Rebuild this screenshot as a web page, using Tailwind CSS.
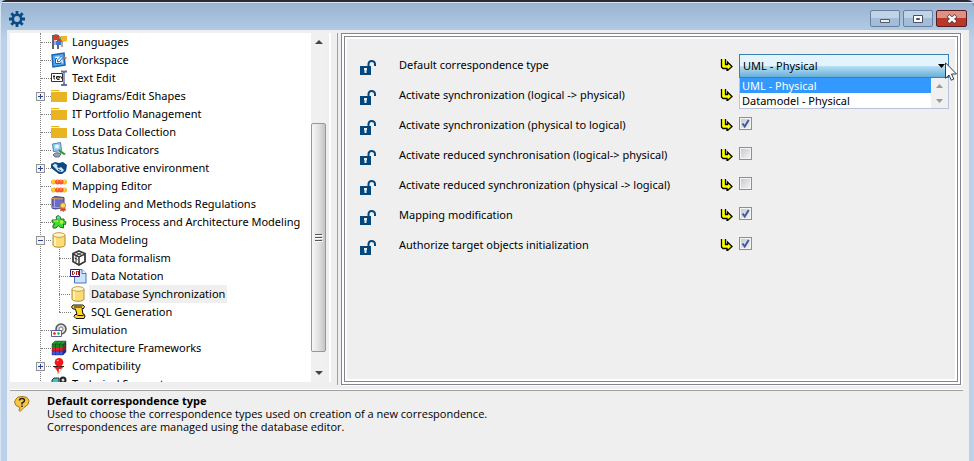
<!DOCTYPE html>
<html lang="en">
<head>
    <meta charset="UTF-8">
    <meta name="viewport" content="width=device-width, initial-scale=1.0">
    <title>Options</title>
    <script src="https://cdn.jsdelivr.net/npm/@tailwindcss/browser@4"></script>
</head>
<body class="h-screen overflow-hidden bg-[#b9d1ea] font-['Noto_Sans','Open_Sans',sans-serif] text-[11px] text-black">

    <!-- shared shapes -->
    <svg class="hidden">
        <symbol id="folder" viewBox="0 0 16 16"><path d="M0 2h8l1 2h7v10H0z" fill="#e8b422"/><path d="M0 3.5h9" stroke="#fff1bd"/></symbol>
        <symbol id="cylinder" viewBox="0 0 16 16">
            <path d="M2 3v10c0 3 12 3 12 0V3z" fill="#fbdc75" stroke="#b48a32"/>
            <path d="M4 5v9" stroke="#fff3b8" stroke-width="2"/>
            <ellipse cx="8" cy="3" rx="6" ry="2.3" fill="#fff5c5" stroke="#c59d45"/>
        </symbol>
        <symbol id="lock" viewBox="0 0 16 16">
            <path d="M0 6h7.500V4.500C7.500 1.500 9 0 11.500 0S16 1.500 16 4v2h-2V4.500C14 2.700 13 2 11.700 2S9.500 2.800 9.500 4.500V6H11v9H0z" fill="#03477f"/>
            <path d="M4 8h3v2l-.5.500V13h-2v-2.500L4 10z" fill="#e5edf4"/>
        </symbol>
        <symbol id="arrow" viewBox="0 0 13 13"><path d="M1.500 1.500v7.500l1.500 1.500h4v2.500l5-4.500L7 4v2.500H5.500v-5z" fill="#ff0"/><path d="M1.500 1v8L3 10.500h4V13l5-4.500L7.500 4v2.500h-2V1" fill="none" stroke="#000" stroke-width="1.300"/></symbol>
    </svg>

    <div class="flex h-screen flex-col rounded-t-md border-t-2 border-l border-t-[#2c2b35] border-l-[#d8e5f3] bg-linear-to-b from-[#98b3d0] via-[#b9d1ea] via-8% to-[#b9d1ea]">
        <header class="flex h-7 shrink-0 items-center justify-between border-t border-[#d9e6f4] pr-[7px] pl-2">
            <svg class="mt-1 size-4 text-[#0a4a85]" viewBox="0 0 16 16" fill="none" stroke="currentColor">
                <circle cx="8" cy="8" r="4.200" stroke-width="2.600"/>
                <g stroke-width="2.800"><path d="M8 0v3M8 13v3M0 8h3M13 8h3M2.300 2.300l2.200 2.200M11.500 11.500l2.200 2.200M2.300 13.700l2.200-2.200M11.500 4.500l2.200-2.200"/></g>
            </svg>
            <div class="mt-1 flex gap-[3px]">
                <button type="button" aria-label="Minimize" class="flex h-[17px] w-[30px] items-center justify-center rounded-xs border border-[#67809d] bg-linear-to-b from-[#c1d3e7] from-50% to-[#a3bcd7] to-50%">
                    <svg class="h-4 w-5 shrink-0" viewBox="0 0 20 16"><path d="M5.500 8.500h9v3h-9z" fill="#eee" stroke="#555a66"/></svg>
                </button>
                <button type="button" aria-label="Maximize" class="flex h-[17px] w-[30px] items-center justify-center rounded-xs border border-[#67809d] bg-linear-to-b from-[#c1d3e7] from-50% to-[#a3bcd7] to-50%">
                    <svg class="h-4 w-5 shrink-0" viewBox="0 0 20 16"><path d="M5.500 4.500h9v7h-9z" fill="#fff" stroke="#4a4f6b"/><path d="M8.500 7.500h3v1h-3z" fill="#9db8d5" stroke="#4a4f6b"/></svg>
                </button>
                <button type="button" aria-label="Close" class="flex h-[17px] w-[31px] items-center justify-center rounded-xs border border-[#5b1a22] bg-linear-to-b from-[#dc9183] from-50% to-[#b93828] to-50%">
                    <svg class="h-4 w-5 shrink-0" viewBox="0 0 20 16"><path d="M6 4.500l8 7M14 4.500l-8 7" stroke="#59424b" stroke-width="4"/><path d="M6.500 5l7 6M13.500 5l-7 6" stroke="#fff" stroke-width="2.400"/></svg>
                </button>
            </div>
        </header>

        <main class="mr-[5px] ml-1.5 flex min-h-0 flex-1 flex-col bg-[#efefef] pt-[3px] pr-1.5 pl-[3px]">
            <div class="flex min-h-0 flex-1 gap-[3px]">

                <!-- option tree -->
                <div class="flex w-[328px] shrink-0 border-r border-[#a0a0a0] pb-[3px]">
                    <nav class="min-w-0 flex-1 overflow-hidden bg-white" aria-label="Options">
                        <ul class="ml-[30px] border-l border-dotted border-[#808080] leading-[18px] whitespace-nowrap">
                            <li class="flex h-[18px] items-center">
                                <span class="w-2.5 border-t border-dotted border-[#808080]"></span>
                                <svg class="size-4 shrink-0" viewBox="0 0 16 16"><path d="M2 1v14M7 5v10" stroke="#333" stroke-width="1.500"/><path d="M2 2q3-2 6 0t5 0v5q-3 2-5 0T2 7z" fill="#c9412d"/><path d="M10 2h6v5l-4 1-2-2z" fill="#f0b52b"/><path d="M5 7h5v4H5z" fill="#4277d1"/><path d="M3 7h2v4H3z" fill="#8fb6e8"/><path d="M8 3h2v2H8z" fill="#4b5"/><path d="M2 1.500q3-1.500 6 0M11 8v5" stroke="#555" fill="none"/></svg>
                                <a href="#" class="ml-[5px]">Languages</a>
                            </li>
                            <li class="flex h-[18px] items-center">
                                <span class="w-2.5 border-t border-dotted border-[#808080]"></span>
                                <svg class="size-4 shrink-0" viewBox="0 0 16 16"><path d="M1 3l12-2 1 12-12 2z" fill="#58a9ef" stroke="#1765b5" stroke-width="1.500"/><path d="M4.500 5h6l1 6h-7z" fill="#fff" stroke="#dceeff"/><path d="M10.500 4l-4 4v2l2-.5 3.500-4M6 6.500H4.500v5H10V9.500" stroke="#1765b5" fill="none"/><path d="M12 4l4 1.500-2 2z" fill="#e67528"/></svg>
                                <a href="#" class="ml-[5px]">Workspace</a>
                            </li>
                            <li class="flex h-[18px] items-center">
                                <span class="w-2.5 border-t border-dotted border-[#808080]"></span>
                                <svg class="size-4 shrink-0" viewBox="0 0 16 16"><path d="M.5 3.500h11v8H.500z" fill="#fff" stroke="#333"/><path d="M3 5v4h1M2 6.500h2M6 9.500h2.500M5.500 8h3V6.500h-3V9M9.500 6l2 3.500" stroke="#222" fill="none"/><path d="M10 1.500h2l1 1 1-1h2M13 2v12M10 15h2l1-1 1 1h2" stroke="#6b6d9e" fill="none" stroke-width="2"/><path d="M13 3v10" stroke="#c7c9e8"/></svg>
                                <a href="#" class="ml-[5px]">Text Edit</a>
                            </li>
                            <li class="relative flex h-[18px] items-center">
                                <button type="button" aria-label="Expand" class="absolute -left-[5px] flex size-[9px] items-center justify-center border border-[#919191] bg-[#f4f4f4]"><svg class="size-[5px] shrink-0" viewBox="0 0 5 5"><path d="M0 2.500h5M2.500 0v5" stroke="#28459c"/></svg></button>
                                <span class="w-2.5 border-t border-dotted border-[#808080]"></span>
                                <svg class="size-4 shrink-0"><use href="#folder"/></svg>
                                <a href="#" class="ml-[5px]">Diagrams/Edit Shapes</a>
                            </li>
                            <li class="flex h-[18px] items-center">
                                <span class="w-2.5 border-t border-dotted border-[#808080]"></span>
                                <svg class="size-4 shrink-0"><use href="#folder"/></svg>
                                <a href="#" class="ml-[5px]">IT Portfolio Management</a>
                            </li>
                            <li class="flex h-[18px] items-center">
                                <span class="w-2.5 border-t border-dotted border-[#808080]"></span>
                                <svg class="size-4 shrink-0"><use href="#folder"/></svg>
                                <a href="#" class="ml-[5px]">Loss Data Collection</a>
                            </li>
                            <li class="flex h-[18px] items-center">
                                <span class="w-2.5 border-t border-dotted border-[#808080]"></span>
                                <svg class="size-4 shrink-0" viewBox="0 0 16 16"><path d="M1.500 2l8-1.500 1 8-8 1z" fill="#8fd0f3" stroke="#5a80a8"/><circle cx="6" cy="4.500" r="2" fill="#e9f8ff"/><path d="M2 13q3-4 8-1l-2 3H4z" fill="#9c9eb5" stroke="#6a6b85"/><path d="M8 7l7 5-2 1-5-3z" fill="#2f9e35"/></svg>
                                <a href="#" class="ml-[5px]">Status Indicators</a>
                            </li>
                            <li class="relative flex h-[18px] items-center">
                                <button type="button" aria-label="Expand" class="absolute -left-[5px] flex size-[9px] items-center justify-center border border-[#919191] bg-[#f4f4f4]"><svg class="size-[5px] shrink-0" viewBox="0 0 5 5"><path d="M0 2.500h5M2.500 0v5" stroke="#28459c"/></svg></button>
                                <span class="w-2.5 border-t border-dotted border-[#808080]"></span>
                                <svg class="size-4 shrink-0" viewBox="0 0 16 16"><path d="M0 4l4-2 4 1 4-1 4 3-1 6-4 3H8L4 11 0 8z" fill="#0b4a80"/><path d="M1.500 5.500l2.500-2L6.500 5 6 7l2 1 2-1 3 3-1 1.500-2 .5-3-1-3-3z" fill="#cfe3f2"/><path d="M7 9l3 2" stroke="#0b4a80"/></svg>
                                <a href="#" class="ml-[5px]">Collaborative environment</a>
                            </li>
                            <li class="flex h-[18px] items-center">
                                <span class="w-2.5 border-t border-dotted border-[#808080]"></span>
                                <svg class="size-4 shrink-0" viewBox="0 0 16 16"><path d="M0 4h16M0 12h16" stroke="#e59a1c"/><g fill="#ffc928" stroke="#e2a21c" stroke-width=".6"><circle cx="2.500" cy="4" r="2.200"/><circle cx="13.500" cy="4" r="2.200"/><circle cx="2.500" cy="12" r="2.200"/><circle cx="13.500" cy="12" r="2.200"/></g><g fill="#fa5b27"><circle cx="6.500" cy="4" r="2.500"/><circle cx="10" cy="4" r="2.500"/><circle cx="6.500" cy="12" r="2.500"/><circle cx="10" cy="12" r="2.500"/></g><path d="M1.500 3h1M13 3h1M6 3h1M9.500 3h1M1.500 11h1M13 11h1M6 11h1M9.500 11h1" stroke="#fff0a0"/></svg>
                                <a href="#" class="ml-[5px]">Mapping Editor</a>
                            </li>
                            <li class="flex h-[18px] items-center">
                                <span class="w-2.5 border-t border-dotted border-[#808080]"></span>
                                <svg class="size-4 shrink-0" viewBox="0 0 16 16"><path d="M1 2l3-1.500 9 1V12l-9 1-3-1z" fill="#6a6cc9" stroke="#42438a"/><path d="M3.500 3v9" stroke="#a5a7f0"/><path d="M1 2.500l11 .5M1 11l9 1" stroke="#d9a54a"/><path d="M10 11l-1 4.500 2-1 1.500 1.500 1-1.500 1.500.5-1-4z" fill="#d6452d"/><circle cx="12" cy="9.500" r="2.700" fill="#f7d774" stroke="#bd8a2d"/></svg>
                                <a href="#" class="ml-[5px]">Modeling and Methods Regulations</a>
                            </li>
                            <li class="flex h-[18px] items-center">
                                <span class="w-2.5 border-t border-dotted border-[#808080]"></span>
                                <svg class="size-4 shrink-0" viewBox="0 0 16 16"><path d="M6 5l-1-2 2-1.500L9.500 3 9 5h4V7l2 1-.5 2.500-2-.5V14l-4-1-1-1.500L5 14H2v-3l2-1-3-2V6h3z" fill="#3ddf2e" stroke="#2a6b25"/><path d="M6 2.500h3v2H6z" fill="#42dff4"/><path d="M2 6.500h5v1H3z" fill="#ffe33d"/><path d="M9 6.500h3v3H9z" fill="#b8f53a"/></svg>
                                <a href="#" class="ml-[5px]">Business Process and Architecture Modeling</a>
                            </li>
                            <li>
                                <div class="relative flex h-[18px] items-center">
                                    <button type="button" aria-label="Collapse" class="absolute -left-[5px] flex size-[9px] items-center justify-center border border-[#919191] bg-[#f4f4f4]"><svg class="size-[5px] shrink-0" viewBox="0 0 5 5"><path d="M0 2.500h5" stroke="#28459c"/></svg></button>
                                    <span class="w-2.5 border-t border-dotted border-[#808080]"></span>
                                    <svg class="size-4 shrink-0"><use href="#cylinder"/></svg>
                                    <a href="#" class="ml-[5px]">Data Modeling</a>
                                </div>
                                <ul class="relative ml-[18px] before:absolute before:top-0 before:bottom-[9px] before:border-l before:border-dotted before:border-[#808080]">
                                    <li class="flex h-[18px] items-center">
                                        <span class="w-3 border-t border-dotted border-[#808080]"></span>
                                        <svg class="size-4 shrink-0" viewBox="0 0 16 16"><path d="M8 1l6 2.500v8L8 15l-6-3.500v-8z" fill="#fff" stroke="#3b3b3b" stroke-width="1.800"/><path d="M2 4l6 3 6-3M8 7v8" stroke="#3b3b3b" stroke-width="1.500" fill="none"/><path d="M5 2.500l6 3M11 2.500l-6 3M3.500 8l3 1.500M5 6v6" stroke="#3b3b3b" fill="none"/></svg>
                                        <a href="#" class="ml-1">Data formalism</a>
                                    </li>
                                    <li class="flex h-[18px] items-center">
                                        <span class="w-[11px] border-t border-dotted border-[#808080]"></span>
                                        <svg class="h-4 w-[17px] shrink-0" viewBox="0 0 17 16"><path d="M4.500 1.500H12l4 4v9.500H4.500z" fill="#cfe2fb" stroke="#4874b9"/><path d="M12 1.500v4h4" fill="#fff" stroke="#4874b9"/><path d="M.5 1.500h9v7h-9z" fill="#fff" stroke="#20207c"/><path d="M2.500 3v4M2 3.500h1.500l1 1v1l-1 1H2M6.500 7V3l1 1 1-1v4" stroke="#a51c1c" fill="none"/></svg>
                                        <a href="#" class="ml-1">Data Notation</a>
                                    </li>
                                    <li class="flex h-[18px] items-center">
                                        <span class="w-[11px] border-t border-dotted border-[#808080]"></span>
                                        <svg class="size-4 shrink-0"><use href="#cylinder"/></svg>
                                        <a href="#" class="ml-[3px] bg-[#efefef] px-0.5">Database Synchronization</a>
                                    </li>
                                    <li class="flex h-[18px] items-center">
                                        <span class="w-3 border-t border-dotted border-[#808080]"></span>
                                        <svg class="size-4 shrink-0" viewBox="0 0 16 16"><path d="M2 1h10l1.500 1.500-1 2H11l1 5.500h1l1 2-1 2.500H5l-2-2 1-2h2L4.500 5H2L.500 3z" fill="#ffd82c" stroke="#111"/><path d="M3 3h8M6.500 11.500h6" stroke="#111"/></svg>
                                        <a href="#" class="ml-1">SQL Generation</a>
                                    </li>
                                </ul>
                            </li>
                            <li class="flex h-[18px] items-center">
                                <span class="w-2.5 border-t border-dotted border-[#808080]"></span>
                                <svg class="size-4 shrink-0" viewBox="0 0 16 16"><circle cx="10" cy="7" r="5" fill="#ddd" stroke="#555" stroke-width="1.500"/><circle cx="10" cy="7" r="2" fill="#fff" stroke="#777"/><path d="M.5 8.500h10v6H.500z" fill="#fff" stroke="#5b5fa0"/><circle cx="3.500" cy="11.500" r="1.300" fill="#f2142c"/><circle cx="7.500" cy="11.500" r="1.300" fill="#15b53d"/></svg>
                                <a href="#" class="ml-[5px]">Simulation</a>
                            </li>
                            <li class="flex h-[18px] items-center">
                                <span class="w-2.5 border-t border-dotted border-[#808080]"></span>
                                <svg class="size-4 shrink-0" viewBox="0 0 16 16"><path d="M1 4l3-3h11l-3 3z" fill="#25a52e"/><path d="M1 4h11v3.500H1z" fill="#19851f"/><path d="M1 7.500h11V11H1z" fill="#e51f35"/><path d="M1 11h11v4H1z" fill="#3f53e4"/><path d="M12 4l3-3v3.500l-3 3z" fill="#155e1a"/><path d="M12 7.500l3-3V8l-3 3z" fill="#96162a"/><path d="M12 11l3-3v4l-3 3z" fill="#202f8e"/><path d="M1 4h11v11H1zM1 7.500h11l3-3M1 11h11l3-3M4.500 15V4l3-3M8.500 15V4l3-3M12 4l3-3v11l-3 3M1 4l3-3h11" stroke="#222" stroke-width=".4" fill="none"/></svg>
                                <a href="#" class="ml-[5px]">Architecture Frameworks</a>
                            </li>
                            <li class="relative flex h-[18px] items-center">
                                <button type="button" aria-label="Expand" class="absolute -left-[5px] flex size-[9px] items-center justify-center border border-[#919191] bg-[#f4f4f4]"><svg class="size-[5px] shrink-0" viewBox="0 0 5 5"><path d="M0 2.500h5M2.500 0v5" stroke="#28459c"/></svg></button>
                                <span class="w-2.5 border-t border-dotted border-[#808080]"></span>
                                <svg class="size-4 shrink-0" viewBox="0 0 16 16"><path d="M13 8l-6 8-1-4z" fill="#fff" stroke="#999" stroke-width=".6"/><path d="M2 8h11l-3 3H8l-.5 4L5 11z" fill="#ed1717"/><path d="M2 8.500h11" stroke="#222"/><circle cx="8" cy="4.300" r="4.300" fill="#f81414"/><path d="M6 3l1.500-1" stroke="#ffb0b0" stroke-width="1.500"/></svg>
                                <a href="#" class="ml-[5px]">Compatibility</a>
                            </li>
                            <li class="flex h-[18px] items-center">
                                <span class="w-2.5 border-t border-dotted border-[#808080]"></span>
                                <svg class="size-4 shrink-0" viewBox="0 0 16 16"><path d="M1 4l2-2h5v12H1z" fill="#40bfc4" stroke="#333"/><circle cx="12" cy="4" r="2.500" fill="#ddd" stroke="#222" stroke-width="2"/><path d="M12 6v9" stroke="#444" stroke-width="2"/></svg>
                                <a href="#" class="ml-[5px]">Technical Support</a>
                            </li>
                        </ul>
                    </nav>
                    <div class="mr-[3px] flex w-[15px] flex-col items-center bg-[#f0f0f0]">
                        <svg class="h-[18px] w-2 shrink-0" viewBox="0 0 8 18"><path d="M4 7l4 4H0z" fill="#444"/></svg>
                        <div class="flex-[72]"></div>
                        <div class="flex w-[15px] flex-[227] items-center justify-center rounded-xs border border-[#979797] bg-linear-to-r from-[#f6f6f6] via-[#e2e2e2] to-[#c5c5c9]">
                            <svg class="h-2.5 w-2" viewBox="0 0 8 10"><path d="M0 1.500h7M0 4.500h7M0 7.500h7" stroke="#555"/><path d="M1 2.500h7M1 5.500h7M1 8.500h7" stroke="#fff"/></svg>
                        </div>
                        <div class="flex-[12]"></div>
                        <svg class="h-[18px] w-2 shrink-0" viewBox="0 0 8 18"><path d="M0 7h8l-4 4z" fill="#444"/></svg>
                    </div>
                    <div class="w-0.5 bg-white"></div>
                    <div class="w-1.5"></div>
                </div>

                <!-- settings -->
                <section class="mr-0.5 min-w-0 flex-1 border border-[#84858f] bg-white p-0.5 shadow-[2px_1px_0_#ffffff]">
                    <form class="flex h-full flex-col border border-[#84858f] bg-[#efefef] pt-3 pl-[15px] shadow-[inset_0_0_0_2px_#ffffff]">
                        <div class="flex h-[30px]">
                            <svg class="mt-[11px] size-4 shrink-0"><use href="#lock"/></svg>
                            <label for="type" class="ml-[23px] w-[321px] pt-[7px] leading-[18px]">Default correspondence type</label>
                            <svg class="mt-[9px] mr-1.5 size-[13px] shrink-0"><use href="#arrow"/></svg>
                            <div class="relative mt-[5px] h-6 w-[210px]">
                                <select id="type" class="h-6 w-full appearance-none border border-[#3c7fb1] bg-linear-to-b from-[#e3f4fc] from-50% via-[#b8e0f3] via-50% to-[#66afd8] pl-[3px]">
                                    <option>UML - Physical</option>
                                    <option>Datamodel - Physical</option>
                                </select>
                                <svg class="pointer-events-none absolute top-2.5 right-1 h-1 w-[7px]" viewBox="0 0 7 4"><path d="M0 0h7L3.500 4z"/></svg>
                                <div class="absolute top-6 left-0 z-10 flex w-full border border-t-0 border-[#b9c4dc] bg-white">
                                    <ul role="listbox" class="flex-1 leading-[15px]">
                                        <li role="option" aria-selected="true" class="bg-[#3399ff] pl-0.5 text-white">UML - Physical</li>
                                        <li role="option" aria-selected="false" class="pl-0.5">Datamodel - Physical</li>
                                    </ul>
                                    <div class="flex w-[17px] flex-col items-center justify-around bg-[#f0f0f0]">
                                        <svg class="h-1 w-[7px]" viewBox="0 0 7 4"><path d="M3.500 0L7 4H0z" fill="#999"/></svg>
                                        <svg class="h-1 w-[7px]" viewBox="0 0 7 4"><path d="M0 0h7L3.500 4z" fill="#999"/></svg>
                                    </div>
                                </div>
                                <!-- mouse pointer -->
                                <svg class="absolute top-2 -right-2 z-20 h-[19px] w-3" viewBox="0 0 12 19"><path d="M.5.800v15.500l3.500-3.300 2.300 5.200 2.500-1.100L6.500 12h5z" fill="#fff" stroke="#333b50"/></svg>
                            </div>
                        </div>
                        <div class="flex h-[30px]">
                            <svg class="mt-[11px] size-4 shrink-0"><use href="#lock"/></svg>
                            <label for="lp" class="ml-[23px] w-[321px] pt-[7px] leading-[18px]">Activate synchronization (logical -&gt; physical)</label>
                            <svg class="mt-[9px] mr-1.5 size-[13px] shrink-0"><use href="#arrow"/></svg>
                            <input id="lp" type="checkbox" checked class="mt-2 size-[13px] appearance-none border border-[#8e8f8f] bg-[#f4f4f4]">
                        </div>
                        <div class="flex h-[30px]">
                            <svg class="mt-[11px] size-4 shrink-0"><use href="#lock"/></svg>
                            <label for="pl" class="ml-[23px] w-[321px] pt-[7px] leading-[18px]">Activate synchronization (physical to logical)</label>
                            <svg class="mt-[9px] mr-1.5 size-[13px] shrink-0"><use href="#arrow"/></svg>
                            <span class="relative mt-2 size-[13px]">
                                <input id="pl" type="checkbox" checked class="peer block size-[13px] appearance-none border border-[#8e8f8f] bg-linear-to-br from-[#c3c7ce] to-[#f6f6f6] shadow-[inset_0_0_0_1px_#f4f4f4]">
                                <svg class="pointer-events-none absolute inset-0 hidden peer-checked:block" viewBox="0 0 13 13"><path d="M3.500 6.500l2.200 3L9.700 3" fill="none" stroke="#435a9c" stroke-width="2"/></svg>
                            </span>
                        </div>
                        <div class="flex h-[30px]">
                            <svg class="mt-[11px] size-4 shrink-0"><use href="#lock"/></svg>
                            <label for="rlp" class="ml-[23px] w-[321px] pt-[7px] leading-[18px]">Activate reduced synchronisation (logical-&gt; physical)</label>
                            <svg class="mt-[9px] mr-1.5 size-[13px] shrink-0"><use href="#arrow"/></svg>
                            <span class="relative mt-2 size-[13px]">
                                <input id="rlp" type="checkbox" class="peer block size-[13px] appearance-none border border-[#8e8f8f] bg-linear-to-br from-[#c3c7ce] to-[#f6f6f6] shadow-[inset_0_0_0_1px_#f4f4f4]">
                                <svg class="pointer-events-none absolute inset-0 hidden peer-checked:block" viewBox="0 0 13 13"><path d="M3.500 6.500l2.200 3L9.700 3" fill="none" stroke="#435a9c" stroke-width="2"/></svg>
                            </span>
                        </div>
                        <div class="flex h-[30px]">
                            <svg class="mt-[11px] size-4 shrink-0"><use href="#lock"/></svg>
                            <label for="rpl" class="ml-[23px] w-[321px] pt-[7px] leading-[18px]">Activate reduced synchronization (physical -&gt; logical)</label>
                            <svg class="mt-[9px] mr-1.5 size-[13px] shrink-0"><use href="#arrow"/></svg>
                            <span class="relative mt-2 size-[13px]">
                                <input id="rpl" type="checkbox" class="peer block size-[13px] appearance-none border border-[#8e8f8f] bg-linear-to-br from-[#c3c7ce] to-[#f6f6f6] shadow-[inset_0_0_0_1px_#f4f4f4]">
                                <svg class="pointer-events-none absolute inset-0 hidden peer-checked:block" viewBox="0 0 13 13"><path d="M3.500 6.500l2.200 3L9.700 3" fill="none" stroke="#435a9c" stroke-width="2"/></svg>
                            </span>
                        </div>
                        <div class="flex h-[30px]">
                            <svg class="mt-[11px] size-4 shrink-0"><use href="#lock"/></svg>
                            <label for="map" class="ml-[23px] w-[321px] pt-[7px] leading-[18px]">Mapping modification</label>
                            <svg class="mt-[9px] mr-1.5 size-[13px] shrink-0"><use href="#arrow"/></svg>
                            <span class="relative mt-2 size-[13px]">
                                <input id="map" type="checkbox" checked class="peer block size-[13px] appearance-none border border-[#8e8f8f] bg-linear-to-br from-[#c3c7ce] to-[#f6f6f6] shadow-[inset_0_0_0_1px_#f4f4f4]">
                                <svg class="pointer-events-none absolute inset-0 hidden peer-checked:block" viewBox="0 0 13 13"><path d="M3.500 6.500l2.200 3L9.700 3" fill="none" stroke="#435a9c" stroke-width="2"/></svg>
                            </span>
                        </div>
                        <div class="flex h-[30px]">
                            <svg class="mt-[11px] size-4 shrink-0"><use href="#lock"/></svg>
                            <label for="init" class="ml-[23px] w-[321px] pt-[7px] leading-[18px]">Authorize target objects initialization</label>
                            <svg class="mt-[9px] mr-1.5 size-[13px] shrink-0"><use href="#arrow"/></svg>
                            <span class="relative mt-2 size-[13px]">
                                <input id="init" type="checkbox" checked class="peer block size-[13px] appearance-none border border-[#8e8f8f] bg-linear-to-br from-[#c3c7ce] to-[#f6f6f6] shadow-[inset_0_0_0_1px_#f4f4f4]">
                                <svg class="pointer-events-none absolute inset-0 hidden peer-checked:block" viewBox="0 0 13 13"><path d="M3.500 6.500l2.200 3L9.700 3" fill="none" stroke="#435a9c" stroke-width="2"/></svg>
                            </span>
                        </div>
                    </form>
                </section>
            </div>

            <!-- help text -->
            <footer class="mt-[5px] flex border-t border-[#a0a0a0] pt-[3px] pb-7 pl-1 font-['Open_Sans','Noto_Sans',sans-serif] shadow-[0_-1px_0_#ffffff]">
                <svg class="mt-0.5 size-4 shrink-0" viewBox="0 0 16 16"><path d="M4 1l5-.5 4 1 2 3-1 4-4 3-4 4-1-1 1-3-4-2L.500 6 2 3z" fill="#f6c744" stroke="#a87512"/><path d="M5.500 4.500q0-2 2.500-2t2.500 2Q10.500 6 8 7v1.500" fill="none" stroke="#222" stroke-width="1.500"/><path d="M7.200 9.500h1.600V11H7.200z" fill="#222"/></svg>
                <div class="ml-[17px] leading-[13px]">
                    <h2 class="font-bold">Default correspondence type</h2>
                    <p>Used to choose the correspondence types used on creation of a new correspondence.</p>
                    <p>Correspondences are managed using the database editor.</p>
                </div>
            </footer>
        </main>
    </div>
</body>
</html>
